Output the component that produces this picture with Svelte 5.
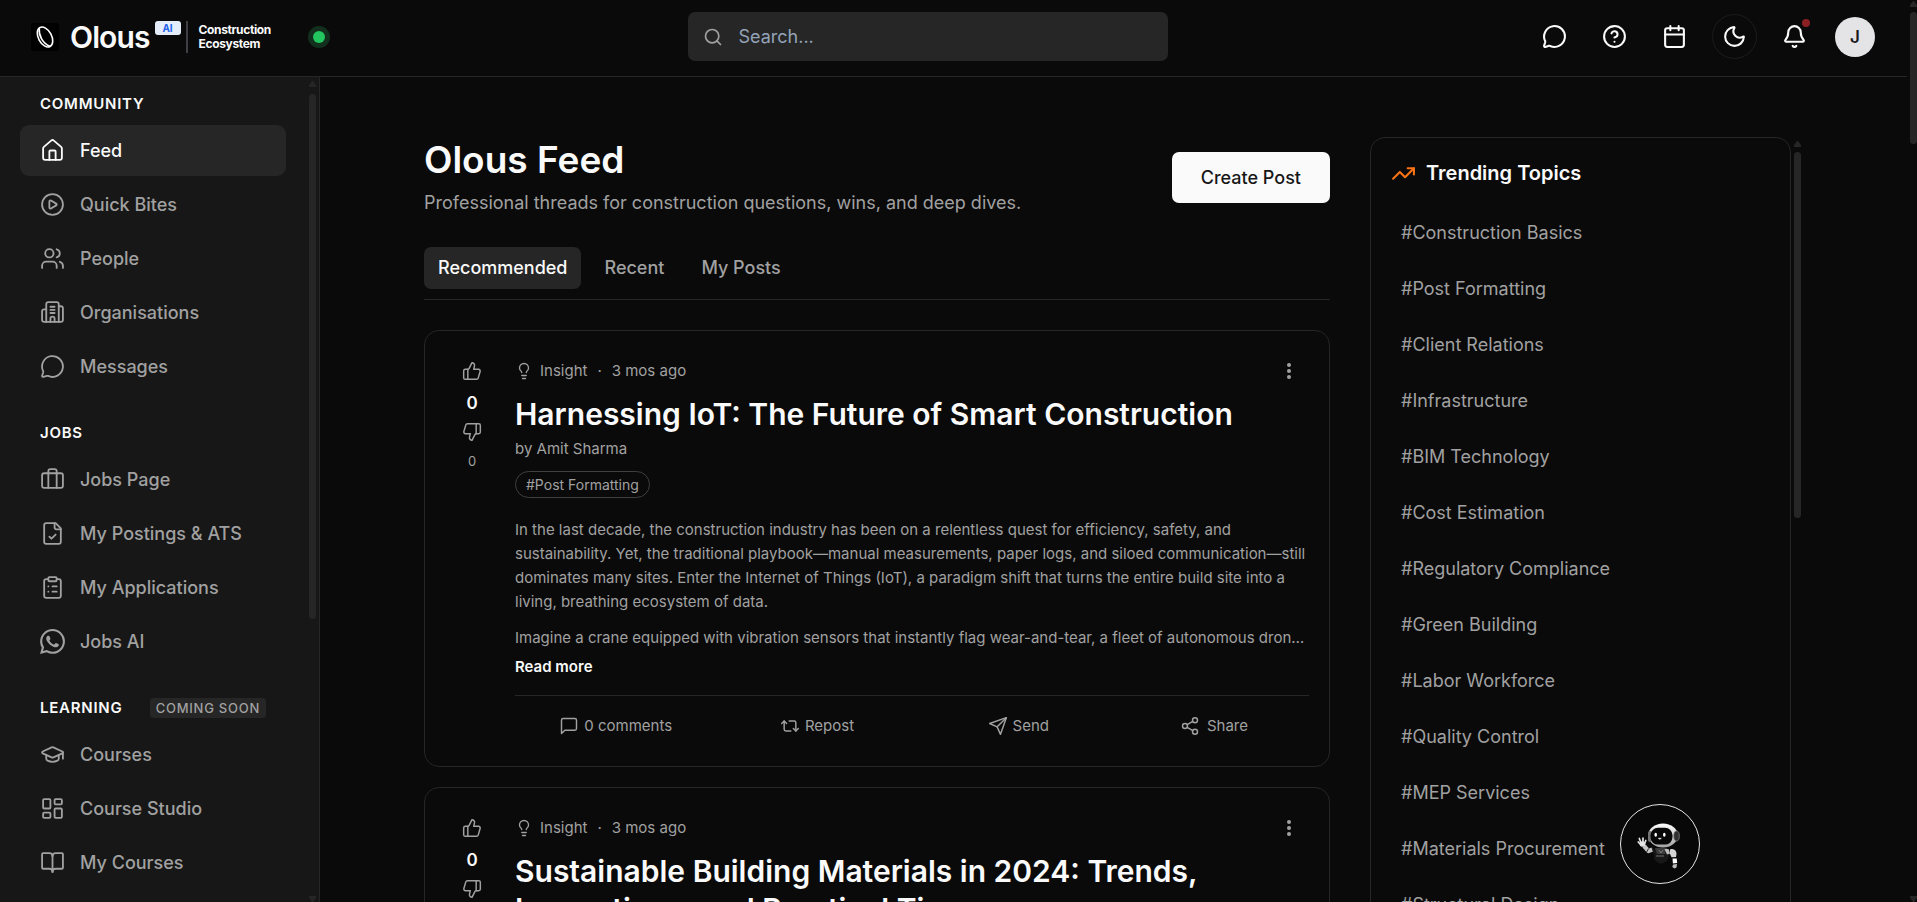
<script lang="ts">
  // 24x24 stroke icons, one entry per path
  const icons: Record<string, string[]> = {
    home: [
      'M15 21v-8a1 1 0 0 0-1-1h-4a1 1 0 0 0-1 1v8',
      'M3 10a2 2 0 0 1 .709-1.528l7-6a2 2 0 0 1 2.582 0l7 6A2 2 0 0 1 21 10v9a2 2 0 0 1-2 2H5a2 2 0 0 1-2-2z'
    ],
    play: ['M12 2a10 10 0 1 0 0 20 10 10 0 0 0 0-20z', 'M9 9.003a1 1 0 0 1 1.517-.859l4.997 2.997a1 1 0 0 1 0 1.718l-4.997 2.997A1 1 0 0 1 9 14.996z'],
    users: ['M16 21v-2a4 4 0 0 0-4-4H6a4 4 0 0 0-4 4v2', 'M9 3a4 4 0 1 0 0 8 4 4 0 0 0 0-8z', 'M22 21v-2a4 4 0 0 0-3-3.87', 'M16 3.13a4 4 0 0 1 0 7.75'],
    building: [
      'M6 21V4a2 2 0 0 1 2-2h8a2 2 0 0 1 2 2v17',
      'M6 9H4a2 2 0 0 0-2 2v8a2 2 0 0 0 2 2h16a2 2 0 0 0 2-2V8a2 2 0 0 0-2-2h-2',
      'M14 21v-3a2 2 0 0 0-4 0v3', 'M10 6.500h4', 'M10 9.500h4', 'M10 12.500h4'
    ],
    message: ['M2.992 16.342a2 2 0 0 1 .094 1.167l-1.065 3.29a1 1 0 0 0 1.236 1.168l3.413-.998a2 2 0 0 1 1.099.092 10 10 0 1 0-4.777-4.719'],
    briefcase: ['M16 20V4a2 2 0 0 0-2-2h-4a2 2 0 0 0-2 2v16', 'M4 6h16a2 2 0 0 1 2 2v10a2 2 0 0 1-2 2H4a2 2 0 0 1-2-2V8a2 2 0 0 1 2-2z'],
    fileCheck: ['M15 2H6a2 2 0 0 0-2 2v16a2 2 0 0 0 2 2h12a2 2 0 0 0 2-2V7Z', 'M14 2v4a2 2 0 0 0 2 2h4', 'm9 15 2 2 4-4'],
    clipboard: [
      'M9 2h6a1 1 0 0 1 1 1v2a1 1 0 0 1-1 1H9a1 1 0 0 1-1-1V3a1 1 0 0 1 1-1z',
      'M16 4h2a2 2 0 0 1 2 2v14a2 2 0 0 1-2 2H6a2 2 0 0 1-2-2V6a2 2 0 0 1 2-2h2',
      'M12 11h4', 'M12 16h4', 'M8 11h.01', 'M8 16h.01'
    ],
    cap: [
      'M21.42 10.922a1 1 0 0 0-.019-1.838L12.83 5.18a2 2 0 0 0-1.66 0L2.6 9.08a1 1 0 0 0 0 1.832l8.57 3.908a2 2 0 0 0 1.66 0z',
      'M22 10v6', 'M6 12.5V16a6 3 0 0 0 12 0v-3.5'
    ],
    dashboard: [
      'M4 3h5a1 1 0 0 1 1 1v7a1 1 0 0 1-1 1H4a1 1 0 0 1-1-1V4a1 1 0 0 1 1-1z',
      'M15 3h5a1 1 0 0 1 1 1v3a1 1 0 0 1-1 1h-5a1 1 0 0 1-1-1V4a1 1 0 0 1 1-1z',
      'M15 12h5a1 1 0 0 1 1 1v7a1 1 0 0 1-1 1h-5a1 1 0 0 1-1-1v-7a1 1 0 0 1 1-1z',
      'M4 16h5a1 1 0 0 1 1 1v3a1 1 0 0 1-1 1H4a1 1 0 0 1-1-1v-3a1 1 0 0 1 1-1z'
    ],
    book: ['M12 5v16', 'M3 18a1 1 0 0 1-1-1V4a1 1 0 0 1 1-1h6a3 3 0 0 1 3 3 3 3 0 0 1 3-3h6a1 1 0 0 1 1 1v13a1 1 0 0 1-1 1h-6a3 3 0 0 0-3 3 3 3 0 0 0-3-3z'],
    search: ['M11 3a8 8 0 1 0 0 16 8 8 0 0 0 0-16z', 'm21 21-4.3-4.3'],
    help: ['M12 2a10 10 0 1 0 0 20 10 10 0 0 0 0-20z', 'M9.09 9a3 3 0 0 1 5.83 1c0 2-3 3-3 3', 'M12 17h.01'],
    calendar: ['M8 2v4', 'M16 2v4', 'M5 4h14a2 2 0 0 1 2 2v14a2 2 0 0 1-2 2H5a2 2 0 0 1-2-2V6a2 2 0 0 1 2-2z', 'M3 10h18'],
    moon: ['M20.985 12.486a9 9 0 1 1-9.473-9.472c.405-.022.617.46.402.803a6 6 0 0 0 8.268 8.268c.344-.215.825-.004.803.401'],
    bell: [
      'M10.268 21a2 2 0 0 0 3.464 0',
      'M3.262 15.326A1 1 0 0 0 4 17h16a1 1 0 0 0 .74-1.673C19.41 13.956 18 12.499 18 8A6 6 0 0 0 6 8c0 4.499-1.411 5.956-2.738 7.326'
    ],
    trending: ['M22 7 13.5 15.5 8.5 10.5 2 17', 'M16 7h6v6'],
    up: ['M7 10v12', 'M15 5.88 14 10h5.83a2 2 0 0 1 1.92 2.56l-2.33 8A2 2 0 0 1 17.5 22H4a2 2 0 0 1-2-2v-8a2 2 0 0 1 2-2h2.76a2 2 0 0 0 1.79-1.11L12 2a3.13 3.13 0 0 1 3 3.88Z'],
    down: ['M17 14V2', 'M9 18.12 10 14H4.17a2 2 0 0 1-1.92-2.56l2.33-8A2 2 0 0 1 6.5 2H20a2 2 0 0 1 2 2v8a2 2 0 0 1-2 2h-2.76a2 2 0 0 0-1.79 1.11L12 22a3.13 3.13 0 0 1-3-3.88Z'],
    bulb: ['M15 14c.2-1 .7-1.7 1.5-2.5 1-.9 1.5-2.2 1.5-3.5A6 6 0 0 0 6 8c0 1 .2 2.2 1.5 3.5.7.7 1.3 1.5 1.5 2.5', 'M9 18h6', 'M10 22h4'],
    comment: ['M21 15a2 2 0 0 1-2 2H7l-4 4V5a2 2 0 0 1 2-2h14a2 2 0 0 1 2 2z'],
    repost: ['m2 9 3-3 3 3', 'M13 18H7a2 2 0 0 1-2-2V6', 'm22 15-3 3-3-3', 'M11 6h6a2 2 0 0 1 2 2v10'],
    send: ['m22 2-7 20-4-9-9-4Z', 'M22 2 11 13'],
    share: [
      'M18 2a3 3 0 1 0 0 6 3 3 0 0 0 0-6z', 'M6 9a3 3 0 1 0 0 6 3 3 0 0 0 0-6z', 'M18 16a3 3 0 1 0 0 6 3 3 0 0 0 0-6z',
      'M8.59 13.51l6.83 3.98', 'M15.41 6.51l-6.82 3.98'
    ]
  }

  const sections = [
    {
      title: 'Community',
      soon: false,
      items: [
        { label: 'Feed', icon: 'home' },
        { label: 'Quick Bites', icon: 'play' },
        { label: 'People', icon: 'users' },
        { label: 'Organisations', icon: 'building' },
        { label: 'Messages', icon: 'message' }
      ]
    },
    {
      title: 'Jobs',
      soon: false,
      items: [
        { label: 'Jobs Page', icon: 'briefcase' },
        { label: 'My Postings & ATS', icon: 'fileCheck' },
        { label: 'My Applications', icon: 'clipboard' },
        { label: 'Jobs AI', icon: 'whatsapp' }
      ]
    },
    {
      title: 'Learning',
      soon: true,
      items: [
        { label: 'Courses', icon: 'cap' },
        { label: 'Course Studio', icon: 'dashboard' },
        { label: 'My Courses', icon: 'book' }
      ]
    }
  ]

  const tabs = ['Recommended', 'Recent', 'My Posts']

  const topics = [
    'Construction Basics', 'Post Formatting', 'Client Relations', 'Infrastructure', 'BIM Technology',
    'Cost Estimation', 'Regulatory Compliance', 'Green Building', 'Labor Workforce', 'Quality Control',
    'MEP Services', 'Materials Procurement', 'Structural Design'
  ]

  const posts = [
    {
      title: 'Harnessing IoT: The Future of Smart Construction',
      author: 'Amit Sharma',
      tag: 'Post Formatting',
      body: [
        'In the last decade, the construction industry has been on a relentless quest for efficiency, safety, and sustainability. Yet, the traditional playbook—manual measurements, paper logs, and siloed communication—still dominates many sites. Enter the Internet of Things (IoT), a paradigm shift that turns the entire build site into a living, breathing ecosystem of data.',
        'Imagine a crane equipped with vibration sensors that instantly flag wear-and-tear, a fleet of autonomous dron…'
      ]
    },
    {
      title: 'Sustainable Building Materials in 2024: Trends, Innovations, and Practical Tips',
      author: 'Amit Sharma',
      tag: 'Green Building',
      body: []
    }
  ]

  let activeItem = $state('Feed')
  let activeTab = $state('Recommended')
  let query = $state('')
</script>

{#snippet icon(name: string, size: number, stroke: number)}
  <svg width={size} height={size} viewBox="0 0 24 24" fill="none" stroke="currentColor" stroke-width={stroke} stroke-linecap="round" stroke-linejoin="round" aria-hidden="true">
    {#each icons[name] as d}
      <path {d} />
    {/each}
  </svg>
{/snippet}

{#snippet whatsapp()}
  <svg width="25" height="25" viewBox="0 0 24 24" fill="currentColor" aria-hidden="true">
    <path d="M17.472 14.382c-.297-.149-1.758-.867-2.03-.967-.273-.099-.471-.148-.67.15-.197.297-.767.966-.94 1.164-.173.199-.347.223-.644.075-.297-.15-1.255-.463-2.39-1.475-.883-.788-1.48-1.761-1.653-2.059-.173-.297-.018-.458.13-.606.134-.133.298-.347.446-.52.149-.174.198-.298.298-.497.099-.198.05-.371-.025-.52-.075-.149-.669-1.612-.916-2.207-.242-.579-.487-.5-.669-.51-.173-.008-.371-.01-.57-.01-.198 0-.52.074-.792.372-.272.297-1.04 1.016-1.04 2.479 0 1.462 1.065 2.875 1.213 3.074.149.198 2.096 3.2 5.077 4.487.709.306 1.262.489 1.694.625.712.227 1.36.195 1.871.118.571-.085 1.758-.719 2.006-1.413.248-.694.248-1.289.173-1.413-.074-.124-.272-.198-.57-.347m-5.421 7.403h-.004a9.87 9.87 0 01-5.031-1.378l-.361-.214-3.741.982.998-3.648-.235-.374a9.86 9.86 0 01-1.51-5.26c.001-5.45 4.436-9.884 9.888-9.884 2.64 0 5.122 1.03 6.988 2.898a9.825 9.825 0 012.893 6.994c-.003 5.45-4.437 9.884-9.885 9.884m8.413-18.297A11.815 11.815 0 0012.05 0C5.495 0 .16 5.335.157 11.892c0 2.096.547 4.142 1.588 5.945L.057 24l6.305-1.654a11.882 11.882 0 005.683 1.448h.005c6.554 0 11.89-5.335 11.893-11.893a11.821 11.821 0 00-3.48-8.413z" />
  </svg>
{/snippet}

{#snippet arrow(dir: string)}
  <svg class="arrow" width="7" height="6" viewBox="0 0 7 6" aria-hidden="true">
    <path d={dir === 'up' ? 'M3 0h1l3 4v2H0V4z' : 'M0 0h7v2L4 6H3L0 2z'} />
  </svg>
{/snippet}

<div class="page">
  <div class="shell">
    <header class="topbar">
      <a class="brand" href="#home">
        <span class="mark">
          <svg width="28" height="28" viewBox="0 0 28 28" fill="none" stroke="#fff" stroke-width="1.6" aria-hidden="true">
            <g transform="rotate(-28 14 14)">
              <ellipse cx="14" cy="14" rx="6.6" ry="10.8" />
              <path d="M13 3.6c-4 6-4 14.800 1 21" />
            </g>
          </svg>
        </span>
        <span class="name">Olous</span>
        <span class="ai">AI</span>
        <span class="tagline">Construction<br />Ecosystem</span>
      </a>
      <span class="status" role="status" aria-label="Online"></span>

      <label class="search">
        {@render icon('search', 20, 2)}
        <input type="search" placeholder="Search..." aria-label="Search" bind:value={query} />
      </label>

      <div class="tools">
        <button class="tool" aria-label="Messages">{@render icon('message', 25, 2)}</button>
        <button class="tool" aria-label="Help">{@render icon('help', 25, 2)}</button>
        <button class="tool" aria-label="Calendar">{@render icon('calendar', 25, 2)}</button>
        <button class="tool ring" aria-label="Toggle theme">{@render icon('moon', 25, 2)}</button>
        <button class="tool" aria-label="Notifications">
          {@render icon('bell', 25, 2)}
          <span class="badge"></span>
        </button>
        <button class="avatar" aria-label="Account">J</button>
      </div>
    </header>

    <div class="body">
      <aside class="sidebar">
        <nav>
          {#each sections as section}
            <section>
              <h2>
                {section.title}
                {#if section.soon}<span class="soon">Coming soon</span>{/if}
              </h2>
              <ul>
                {#each section.items as item}
                  <li>
                    <a href="#{item.icon}" class:active={activeItem === item.label} onclick={() => (activeItem = item.label)}>
                      {#if item.icon === 'whatsapp'}
                        {@render whatsapp()}
                      {:else}
                        {@render icon(item.icon, 25, 1.75)}
                      {/if}
                      {item.label}
                    </a>
                  </li>
                {/each}
              </ul>
            </section>
          {/each}
        </nav>
        <div class="bar side-bar">
          {@render arrow('up')}
          <span class="thumb"></span>
          {@render arrow('down')}
        </div>
      </aside>

      <main>
        <div class="feed">
          <div class="feed-head">
            <div>
              <h1>Olous Feed</h1>
              <p>Professional threads for construction questions, wins, and deep dives.</p>
            </div>
            <button class="create">Create Post</button>
          </div>

          <div class="tabs" role="tablist">
            {#each tabs as tab}
              <button role="tab" aria-selected={activeTab === tab} class:active={activeTab === tab} onclick={() => (activeTab = tab)}>{tab}</button>
            {/each}
          </div>

          <div class="posts">
            {#each posts as post}
              <article class="card">
                <div class="votes">
                  <button class="vote-up" aria-label="Upvote">{@render icon('up', 20, 1.75)}</button>
                  <strong>0</strong>
                  <button aria-label="Downvote">{@render icon('down', 20, 1.75)}</button>
                  <span>0</span>
                </div>
                <div class="content">
                  <div class="meta">
                    <span class="kind">{@render icon('bulb', 18, 1.75)}Insight</span>
                    <span>·</span>
                    <span>3 mos ago</span>
                    <button class="dots" aria-label="Post options">
                      <svg width="20" height="20" viewBox="0 0 20 20" fill="currentColor" aria-hidden="true">
                        <circle cx="10" cy="4" r="2" /><circle cx="10" cy="10" r="2" /><circle cx="10" cy="16" r="2" />
                      </svg>
                    </button>
                  </div>
                  <h3>{post.title}</h3>
                  <p class="by">by {post.author}</p>
                  <a class="tag" href="#tag">#{post.tag}</a>
                  {#if post.body.length}
                    <div class="text">
                      {#each post.body as paragraph}
                        <p>{paragraph}</p>
                      {/each}
                    </div>
                    <button class="read">Read more</button>
                  {/if}
                  <div class="actions">
                    <button>{@render icon('comment', 20, 1.75)}0 comments</button>
                    <button>{@render icon('repost', 20, 1.75)}Repost</button>
                    <button>{@render icon('send', 20, 1.75)}Send</button>
                    <button>{@render icon('share', 20, 1.75)}Share</button>
                  </div>
                </div>
              </article>
            {/each}
          </div>
        </div>

        <aside class="trends">
          <div class="panel">
            <h2><span>{@render icon('trending', 25, 2)}</span>Trending Topics</h2>
            <ul>
              {#each topics as topic}
                <li><a href="#topic">#{topic}</a></li>
              {/each}
            </ul>
          </div>
          <div class="bar trend-bar">
            {@render arrow('up')}
            <span class="thumb"></span>
          </div>
        </aside>
      </main>
    </div>
  </div>

  <div class="bar page-bar">
    {@render arrow('up')}
    <span class="thumb"></span>
    {@render arrow('down')}
  </div>

  <button class="bot" aria-label="Open assistant">
    <svg viewBox="0 0 80 80" aria-hidden="true">
      <defs>
        <linearGradient id="helmet" x1="0" y1="0" x2="0" y2="1">
          <stop offset="0" stop-color="#fff" />
          <stop offset="1" stop-color="#a3a3a3" />
        </linearGradient>
      </defs>
      <path d="M33 45h16l1 5-3 7-5 2.500h-3L34.500 56z" fill="#171717" />
      <path d="M35 44h12l-2 6h-8z" fill="#3a3a3a" />
      <path d="M39 46l2 3 2-3M36 52h8" fill="none" stroke="#8a8a8a" stroke-width=".8" />
      <path d="M32.500 45.500l-4 1.500-4.500-5" fill="none" stroke="#c4c4c4" stroke-width="4.200" stroke-linejoin="round" />
      <path d="M28.500 44.500l-1.800 3.500M32 43.500l1 4" stroke="#333" stroke-width="1" />
      <path d="M21.500 41.500l-3.300-3.500M21.500 40l-2.200-5.500M23 39.500v-5.500M24 41l1.800-4.500" stroke="#e5e5e5" stroke-width="1.700" stroke-linecap="round" />
      <ellipse cx="22.500" cy="40" rx="2.800" ry="2.700" fill="#e5e5e5" />
      <path d="M50 45.500c4-1.500 6.500 1 6.500 4.500l-.5 3-4.500.3-1.800-4z" fill="#d4d4d4" />
      <path d="M52.500 54.500h4.200l.5 4.500-4.300.5z" fill="#fff" />
      <path d="M53 60.500l4-.5-.5 3.500-2 1-2.200-1.500z" fill="#bdbdbd" />
      <path d="M44.500 45h4l1.500 4.500-3 1z" fill="#bdbdbd" />
      <ellipse cx="43" cy="31.500" rx="14.800" ry="12" fill="url(#helmet)" />
      <rect x="28" y="27" width="4" height="11" rx="2" fill="#737373" />
      <rect x="30.500" y="23.800" width="22" height="16.800" rx="7.500" fill="#080808" />
      <ellipse cx="56.500" cy="32" rx="2.800" ry="5" fill="#303030" stroke="#8a8a8a" stroke-width=".7" />
      <ellipse cx="35.700" cy="30.700" rx="1.300" ry="2" fill="#fff" />
      <ellipse cx="44.300" cy="30.700" rx="1.300" ry="2" fill="#fff" />
      <path d="M38.300 34.300q1.500 2 3 0z" fill="#fff" stroke="#fff" stroke-width=".5" />
    </svg>
  </button>
</div>

<style>
  :global(body) {
    background: #0a0a0a;
  }

  .page {
    --bg: #0a0a0a;
    --side: #171717;
    --muted: #262626;
    --line: #262626;
    --text: #fafafa;
    --soft: #a1a1a1;
    display: flex;
    height: 100vh;
    overflow: hidden;
    background: var(--bg);
    color: var(--text);
    font-family: Inter, 'Liberation Sans', sans-serif;
    font-size: 18px;
    line-height: 24px;
  }

  h1, h2, h3, p, ul {
    margin: 0;
    padding: 0;
  }

  ul { list-style: none; }
  svg { display: block; flex-shrink: 0; }
  a { color: inherit; text-decoration: none; }

  button {
    border: 0;
    padding: 0;
    background: none;
    color: inherit;
    font: inherit;
    cursor: pointer;
  }

  .shell {
    flex: 1;
    min-width: 0;
    display: flex;
    flex-direction: column;
  }

  .topbar {
    display: flex;
    align-items: center;
    flex-shrink: 0;
    padding: 12px 32px 15px 31px;
    border-bottom: 1px solid var(--line);
  }

  .brand {
    display: flex;
    align-items: center;
    font-weight: 700;
  }

  .mark {
    background: #000;
    border-radius: 3px;
    margin-right: 11px;
  }

  .name {
    font-size: 30px;
    line-height: 36px;
    font-weight: 600;
    letter-spacing: -0.03em;
  }

  .ai {
    align-self: flex-start;
    margin: 2px 5px 0;
    width: 26px;
    border-radius: 3px;
    background: #e5edfb;
    color: #2563eb;
    font-size: 10px;
    line-height: 14px;
    text-align: center;
  }

  .tagline {
    border-left: 2px solid #3f3f46;
    padding: 2px 0 2px 11px;
    font-size: 12px;
    line-height: 14px;
    letter-spacing: -0.03em;
  }

  .status {
    width: 12px;
    height: 12px;
    margin-left: 42px;
    border-radius: 50%;
    background: #22c55e;
    box-shadow: 0 0 0 5px #12301d;
  }

  .search {
    flex: 0 1 480px;
    height: 49px;
    margin: 0 auto;
    display: flex;
    align-items: center;
    gap: 15px;
    padding: 0 15px;
    box-sizing: border-box;
    border-radius: 7px;
    background: var(--muted);
    color: var(--soft);
  }

  .search input {
    flex: 1;
    min-width: 0;
    border: 0;
    padding: 0;
    outline: none;
    background: none;
    color: var(--text);
    font: inherit;
  }

  .search input::placeholder {
    color: #94a3b8;
    opacity: 1;
  }

  .tools {
    display: flex;
    align-items: center;
    gap: 15px;
  }

  .tool {
    position: relative;
    display: grid;
    place-items: center;
    width: 45px;
    height: 45px;
    box-sizing: border-box;
    border-radius: 50%;
  }

  .ring { border: 1px solid #1c1c1e; }

  .badge {
    position: absolute;
    top: 5px;
    right: 7px;
    width: 8px;
    height: 8px;
    border-radius: 50%;
    background: #8b1f24;
  }

  .avatar {
    width: 40px;
    height: 40px;
    margin-left: 3px;
    border-radius: 50%;
    background: #e4e4e7;
    color: #18181b;
    font-size: 17px;
    font-weight: 600;
  }

  .body {
    flex: 1;
    min-height: 0;
    display: flex;
  }

  .sidebar {
    width: 320px;
    flex-shrink: 0;
    box-sizing: border-box;
    display: flex;
    background: var(--side);
    border-right: 1px solid var(--line);
    overflow: hidden;
  }

  nav {
    flex: 1;
    padding: 17px 23px 0 20px;
    display: flex;
    flex-direction: column;
    gap: 31px;
  }

  nav h2 {
    display: flex;
    align-items: center;
    justify-content: space-between;
    margin-bottom: 11px;
    padding: 0 20px;
    font-size: 15px;
    line-height: 20px;
    font-weight: 600;
    letter-spacing: 0.05em;
    text-transform: uppercase;
  }

  .soon {
    padding: 0 6px;
    border-radius: 4px;
    background: var(--muted);
    color: var(--soft);
    font-size: 13px;
    font-weight: 500;
  }

  nav ul {
    display: flex;
    flex-direction: column;
    gap: 3px;
  }

  nav a {
    display: flex;
    align-items: center;
    gap: 15px;
    height: 51px;
    padding: 0 20px;
    border-radius: 9px;
    color: var(--soft);
    font-weight: 500;
  }

  nav a.active {
    background: var(--muted);
    color: var(--text);
  }

  .bar {
    display: flex;
    flex-direction: column;
    align-items: center;
    flex-shrink: 0;
    width: 7px;
  }

  .arrow { fill: var(--muted); }

  .thumb {
    width: 7px;
    border-radius: 4px;
    background: var(--muted);
  }

  .side-bar {
    padding: 4px 3px 0 0;
    gap: 7px;
  }

  .side-bar .thumb { height: 64%; margin-bottom: auto; }

  .page-bar {
    padding: 1px 0 0 3px;
    gap: 5px;
  }

  .page-bar .thumb { height: 132px; margin-bottom: auto; }

  .trend-bar {
    padding-top: 4px;
    gap: 5px;
  }

  .trend-bar .thumb { height: 366px; }

  main {
    flex: 1;
    min-width: 0;
    display: flex;
    align-items: flex-start;
    gap: 40px;
    padding: 60px 106px 0 104px;
  }

  .feed {
    flex: 1;
    min-width: 0;
  }

  .feed-head {
    display: flex;
    align-items: flex-start;
    justify-content: space-between;
  }

  h1 {
    font-size: 37px;
    line-height: 46px;
    font-weight: 600;
  }

  .feed-head p {
    line-height: 40px;
    color: var(--soft);
  }

  .create {
    height: 51px;
    margin-top: 15px;
    padding: 0 29px;
    border-radius: 7px;
    background: #fafafa;
    color: #171717;
    font-weight: 500;
  }

  .tabs {
    display: flex;
    gap: 9px;
    margin-top: 24px;
    padding-bottom: 10px;
    border-bottom: 1px solid var(--line);
  }

  .tabs button {
    height: 42px;
    padding: 0 14px;
    border-radius: 7px;
    color: var(--soft);
    font-weight: 500;
  }

  .tabs .active {
    background: var(--muted);
    color: var(--text);
  }

  .posts {
    display: flex;
    flex-direction: column;
    gap: 20px;
    margin-top: 30px;
  }

  .card {
    display: flex;
    gap: 21px;
    padding: 28px 20px 20px 25px;
    border: 1px solid var(--line);
    border-radius: 15px;
  }

  .votes {
    width: 44px;
    display: flex;
    flex-direction: column;
    align-items: center;
    gap: 7px;
    padding-top: 2px;
    color: var(--soft);
    font-size: 13px;
  }

  .vote-up { padding-bottom: 3px; }

  .votes strong {
    color: var(--text);
    font-size: 17px;
    font-weight: 600;
  }

  .content {
    flex: 1;
    min-width: 0;
    font-size: 15px;
    color: var(--soft);
  }

  .meta {
    display: flex;
    align-items: center;
    gap: 10px;
  }

  .kind {
    display: flex;
    align-items: center;
    gap: 7px;
  }

  .dots { margin: 0 10px 0 auto; }

  h3 {
    margin-top: 12px;
    color: var(--text);
    font-size: 30px;
    line-height: 38px;
    font-weight: 600;
  }

  .by {
    margin: 5px 0 11px;
    line-height: 22px;
  }

  .tag {
    display: inline-block;
    padding: 0 10px;
    border: 1px solid #404040;
    border-radius: 14px;
    font-size: 14px;
    line-height: 25px;
  }

  .text {
    display: flex;
    flex-direction: column;
    gap: 12px;
    margin-top: 20px;
  }

  .read {
    display: block;
    margin: 5px 0 16px;
    color: var(--text);
    font-weight: 600;
  }

  .actions {
    display: grid;
    grid-template-columns: 1fr 1fr 1fr auto;
    padding-top: 10px;
    border-top: 1px solid var(--line);
  }

  .actions button {
    display: flex;
    align-items: center;
    justify-content: center;
    gap: 5px;
    height: 40px;
  }

  .actions button:last-child {
    gap: 7px;
    padding: 0 61px;
  }

  .trends {
    width: 431px;
    flex-shrink: 0;
    display: flex;
    gap: 3px;
  }

  .panel {
    flex: 1;
    padding: 20px;
    border: 1px solid var(--line);
    border-radius: 15px;
  }

  .panel h2 {
    display: flex;
    align-items: center;
    gap: 10px;
    font-size: 20px;
    line-height: 30px;
    font-weight: 600;
  }

  .panel h2 span { color: #f97316; }

  .panel ul {
    display: flex;
    flex-direction: column;
    gap: 6px;
    margin-top: 20px;
  }

  .panel a {
    display: block;
    padding: 0 10px;
    line-height: 50px;
    color: var(--soft);
  }

  .bot {
    position: fixed;
    right: 217px;
    bottom: 18px;
    width: 80px;
    height: 80px;
    box-sizing: border-box;
    border: 1px solid #e5e5e5;
    border-radius: 50%;
    background: #080808;
  }

  .bot svg {
    width: 80px;
    height: 80px;
    margin: -1px;
  }
</style>
